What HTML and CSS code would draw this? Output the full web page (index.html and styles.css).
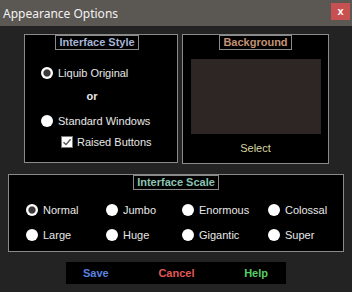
FILE: index.html
```html
<!DOCTYPE html>
<html lang="en">
<head>
    <meta charset="UTF-8">
    <title>Appearance Options</title>
    <link rel="stylesheet" href="styles.css">
</head>
<body>
    <div class="titlebar">
        <span class="title">Appearance Options</span>
        <button class="close">x</button>
    </div>

    <div class="content">
        <div class="top-row">
            <div class="panel style-panel">
                <div class="legend legend-style">Interface Style</div>
                <label class="radio radio-first"><span class="dot checked"></span>Liquib Original</label>
                <div class="or">or</div>
                <label class="radio"><span class="dot"></span>Standard Windows</label>
                <label class="check">
                    <span class="box">
                        <svg width="12" height="12" viewBox="0 0 12 12">
                            <path d="M2.5 6.2 L5 8.6 L9.6 3.2" fill="none" stroke="#555" stroke-width="1.4"/>
                        </svg>
                    </span>Raised Buttons
                </label>
            </div>
            <div class="panel bg-panel">
                <div class="legend legend-bg">Background</div>
                <div class="preview"></div>
                <div class="select">Select</div>
            </div>
        </div>

        <div class="panel scale-panel">
            <div class="legend legend-scale">Interface Scale</div>
            <div class="scale-grid">
                <label class="radio"><span class="dot checked"></span>Normal</label>
                <label class="radio"><span class="dot"></span>Jumbo</label>
                <label class="radio"><span class="dot"></span>Enormous</label>
                <label class="radio"><span class="dot"></span>Colossal</label>
                <label class="radio"><span class="dot"></span>Large</label>
                <label class="radio"><span class="dot"></span>Huge</label>
                <label class="radio"><span class="dot"></span>Gigantic</label>
                <label class="radio"><span class="dot"></span>Super</label>
            </div>
        </div>

        <div class="actions">
            <span class="action save">Save</span>
            <span class="action cancel">Cancel</span>
            <span class="action help">Help</span>
        </div>
    </div>
</body>
</html>
```

FILE: styles.css
```css
/* Global Styles */
* {
    margin: 0;
    padding: 0;
    box-sizing: border-box;
}
body {
    width: 352px;
    height: 292px;
    background: #232323;
    font-family: 'Liberation Sans', Arial, sans-serif;
    font-size: 11px;
    color: #e8e8e8;
    overflow: hidden;
}

/* Title bar */
.titlebar {
    height: 26px;
    background: #5b5753;
    display: flex;
    align-items: center;
    justify-content: space-between;
    padding: 0 2px 0 3px;
}
.title {
    font-family: 'Noto Sans', sans-serif;
    font-size: 12px;
    color: #f2f2f2;
}
.close {
    width: 19px;
    height: 17px;
    margin-top: -4px;
    background: #c75050;
    border: none;
    color: #fff;
    font-family: 'Liberation Sans', Arial, sans-serif;
    font-weight: bold;
    font-size: 11px;
    line-height: 15px;
}

/* Layout */
.content {
    padding: 8px 8px 0 8px;
}
.top-row {
    display: flex;
    gap: 4px;
    padding: 0 15px 0 16px;
}

/* Panels */
.panel {
    background: #000;
    border: 1px solid #8a8a8a;
    display: flex;
    flex-direction: column;
    align-items: center;
}
.legend {
    height: 15px;
    line-height: 13px;
    padding: 0 3px;
    border: 1px solid #8a8a8a;
    font-weight: bold;
    text-align: center;
}
.legend-style {
    color: #a6b4d4;
    margin-right: 8px;
}
.legend-bg {
    color: #c49274;
}
.legend-scale {
    color: #8cc4b4;
}

/* Interface style */
.style-panel {
    width: 154px;
    height: 129px;
    align-items: flex-start;
}
.style-panel .legend {
    align-self: center;
}
.radio {
    display: flex;
    align-items: center;
    height: 14px;
    white-space: nowrap;
}
.dot {
    width: 12px;
    height: 12px;
    border-radius: 50%;
    background: #fff;
    margin-right: 5px;
    flex-shrink: 0;
}
.dot.checked {
    background: radial-gradient(circle, #3a3a3a 0 3px, #8a8a8a 3.5px, #fff 4.2px);
}
.style-panel .radio {
    margin-left: 16px;
}
.radio-first {
    margin-top: 16px;
}
.or {
    align-self: stretch;
    text-align: center;
    font-weight: bold;
    margin: 10px 18px 10px 0;
    height: 14px;
}
.check {
    display: flex;
    align-items: center;
    margin: 7px 0 0 36px;
    height: 14px;
}
.box {
    width: 12px;
    height: 12px;
    background: #fff;
    border: 1px solid #777;
    margin-right: 4px;
    display: flex;
}
.box svg {
    margin: -1px;
}

/* Background */
.bg-panel {
    width: 147px;
    height: 130px;
}
.preview {
    width: 130px;
    height: 75px;
    background: #2e2624;
    margin-top: 9px;
}
.select {
    color: #d8d4a0;
    margin-top: 8px;
}

/* Interface scale */
.scale-panel {
    margin-top: 10px;
    height: 78px;
}
.scale-grid {
    align-self: stretch;
    display: grid;
    grid-template-columns: 80px 76px 86px auto;
    row-gap: 11px;
    padding: 13px 0 0 17px;
}

/* Buttons */
.actions {
    width: 220px;
    height: 22px;
    margin: 10px auto 0;
    background: #000;
    display: flex;
    align-items: center;
    justify-content: space-between;
    font-weight: bold;
    padding: 0 18px 0 17px;
}
.action {
    cursor: pointer;
}
.save {
    color: #5b82e0;
}
.cancel {
    color: #e05858;
}
.help {
    color: #55d065;
}
```
